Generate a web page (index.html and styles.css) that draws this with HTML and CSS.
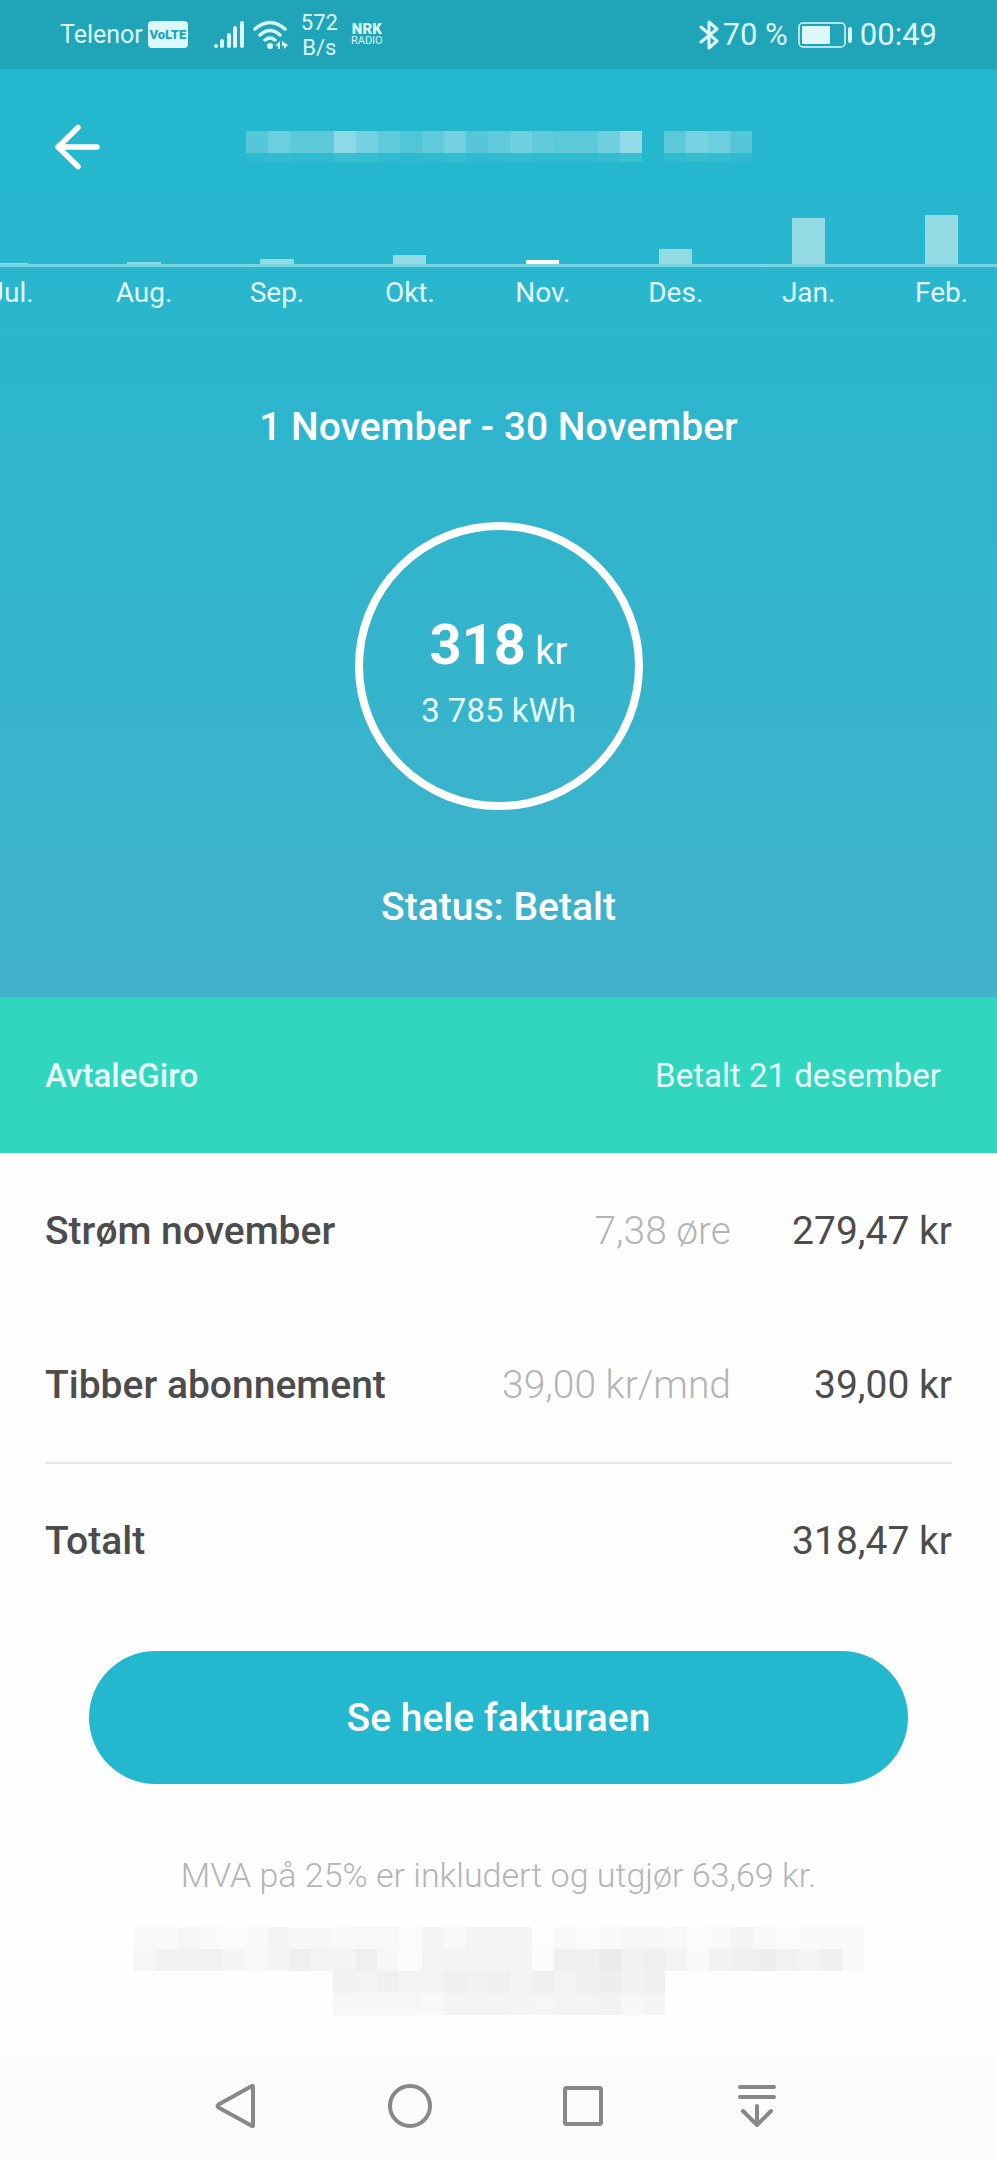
FILE: index.html
```html
<!DOCTYPE html>
<html lang="no">
<head>
<meta charset="utf-8">
<meta name="viewport" content="width=device-width, initial-scale=1">
<title>Faktura november</title>
<link rel="stylesheet" href="styles.css">
</head>
<body>
<div class="status-bar">
  <div class="status-left">
    <span class="carrier">Telenor</span>
    <span class="volte">VoLTE</span>
    <svg class="signal" width="32" height="30" viewBox="0 0 32 30" aria-hidden="true">
      <g stroke="currentColor" stroke-width="4" stroke-linecap="round">
        <path d="M3 26v0M9 21v5M16 15v11M22 8v18M29 3v23"/>
      </g>
    </svg>
    <svg class="wifi" width="36" height="30" viewBox="0 0 36 30" aria-hidden="true">
      <g fill="none" stroke="currentColor" stroke-width="3.500" stroke-linecap="round">
        <path d="M2 9Q17-4 32 9M7 15Q17 6 27 15M12 20Q17 16 22 20"/>
      </g>
      <circle cx="17" cy="26" r="3" fill="currentColor"/>
      <path d="M22 26l5-5v8h-2v-3zM29 21l6 4-4 4v-3h-2z" fill="currentColor"/>
    </svg>
    <span class="speed">572<br>B/s</span>
    <span class="nrk"><b>NRK</b><small>RADIO</small></span>
  </div>
  <div class="status-right">
    <svg width="20" height="30" viewBox="0 0 20 30" aria-hidden="true">
      <path d="M2 7l16 14-8 7V2l8 7L2 22" fill="none" stroke="currentColor" stroke-width="3" stroke-linejoin="round" stroke-linecap="round"/>
    </svg>
    <span class="percent">70 %</span>
    <svg width="54" height="26" viewBox="0 0 54 26" aria-hidden="true">
      <rect x="1" y="1" width="46" height="24" rx="4" fill="none" stroke="currentColor" stroke-width="1.500"/>
      <rect x="4" y="4" width="28" height="18" rx="1" fill="currentColor"/>
      <rect x="50" y="5" width="4" height="16" rx="2" fill="currentColor"/>
    </svg>
    <span class="clock">00:49</span>
  </div>
</div>

<header class="hero">
  <div class="top-bar">
    <button class="back" type="button" aria-label="Tilbake">
      <svg width="52" height="52" viewBox="0 0 52 52" aria-hidden="true">
        <path d="M45 26H6M26 6.500L6 26l20 19.500" fill="none" stroke="currentColor" stroke-width="5.500" stroke-linecap="round" stroke-linejoin="round"/>
      </svg>
    </button>
    <svg class="masked-title" id="title-mask" viewBox="0 0 506 32" aria-hidden="true"></svg>
  </div>

  <div class="chart">
    <div class="track">
      <div class="plot" id="plot"></div>
      <div class="months">
        <span>Jul.</span><span>Aug.</span><span>Sep.</span><span>Okt.</span><span>Nov.</span><span>Des.</span><span>Jan.</span><span>Feb.</span>
      </div>
    </div>
  </div>

  <h1 class="headline">1 November - 30 November</h1>
  <div class="ring">
    <p class="sum"><strong>318</strong> kr</p>
    <p class="usage">3 785 kWh</p>
  </div>
  <p class="headline">Status: Betalt</p>
</header>

<section class="payment">
  <strong>AvtaleGiro</strong>
  <span>Betalt 21 desember</span>
</section>

<main class="invoice">
  <table class="lines">
    <tbody>
      <tr><th scope="row">Strøm november</th><td class="rate">7,38 øre</td><td class="amount">279,47 kr</td></tr>
      <tr><th scope="row">Tibber abonnement</th><td class="rate">39,00 kr/mnd</td><td class="amount">39,00 kr</td></tr>
      <tr class="total"><th scope="row">Totalt</th><td class="rate"></td><td class="amount">318,47 kr</td></tr>
    </tbody>
  </table>
  <button class="cta" type="button">Se hele fakturaen</button>
  <p class="vat">MVA på 25% er inkludert og utgjør 63,69 kr.</p>
  <svg class="masked-note" id="note-mask" viewBox="0 0 726 88" aria-hidden="true"></svg>
</main>

<nav class="system-nav">
  <button type="button" aria-label="Tilbake">
    <svg width="46" height="46" viewBox="0 0 46 46"><path d="M5.500 21.500L39 3Q40 2.500 40 4V42Q40 43.500 39 43L5.500 24.500Q3.500 23 5.500 21.500z"/></svg>
  </button>
  <button type="button" aria-label="Hjem">
    <svg width="46" height="46" viewBox="0 0 46 46"><circle cx="23" cy="23" r="20"/></svg>
  </button>
  <button type="button" aria-label="Oversikt">
    <svg width="46" height="46" viewBox="0 0 46 46"><rect x="5" y="5" width="36" height="36" rx="1.500"/></svg>
  </button>
  <button type="button" aria-label="Varsler">
    <svg width="46" height="46" viewBox="0 0 46 46"><path d="M6 4H40M6 14H40M23 23V42M9 28L23 42L37 28"/></svg>
  </button>
</nav>
<script src="script.js"></script>
</body>
</html>
```

FILE: styles.css
```css
* {
  box-sizing: border-box;
}

body {
  margin: 0;
  min-height: 100vh;
  display: flex;
  flex-direction: column;
  background: #fefefe;
  color: #4c4c4c;
  font-family: Roboto, "Liberation Sans", sans-serif;
  font-size: 39px;
}

p,
h1 {
  margin: 0;
}

button {
  padding: 0;
  border: 0;
  background: none;
  color: inherit;
  font: inherit;
}

svg {
  display: block;
}

/* Status bar */

.status-bar {
  display: flex;
  justify-content: space-between;
  align-items: center;
  height: 69px;
  padding: 0 60px;
  background: #20a5b8;
  color: #dcf8fb;
}

.status-left,
.status-right {
  display: flex;
  align-items: center;
}

.carrier {
  font-size: 25px;
}

.volte {
  width: 40px;
  margin-left: 5px;
  border-radius: 4px;
  background: #dcf8fb;
  color: #20a5b8;
  font-size: 13px;
  font-weight: 900;
  line-height: 27px;
  text-align: center;
}

.signal {
  margin-left: 25px;
}

.wifi {
  margin-left: 8px;
}

.speed {
  margin-left: 12px;
  font-size: 22px;
  line-height: 25px;
  text-align: center;
}

.nrk {
  display: flex;
  flex-direction: column;
  margin-left: 13px;
  text-align: center;
  line-height: 12px;
}

.nrk b {
  font-size: 15px;
  font-weight: 900;
}

.nrk small {
  font-size: 11px;
}

.percent,
.clock {
  font-size: 31px;
}

.percent {
  margin: 0 10px 0 4px;
}

.clock {
  margin-left: 8px;
}

/* Header with chart and summary */

.hero {
  display: flex;
  flex-direction: column;
  align-items: center;
  padding-bottom: 66px;
  background: linear-gradient(#22b8cf, #40b2ca);
  color: #fff;
}

.top-bar {
  align-self: stretch;
  display: grid;
  grid-template-columns: 52px 1fr 52px;
  align-items: center;
  padding: 52px 52px 38px;
}

.masked-title {
  justify-self: center;
  width: 510px;
  height: 32px;
}

.chart {
  align-self: stretch;
  overflow: hidden;
}

/* Eight months, of which seven and a half fit on the screen */
.track {
  width: calc(100% / 7.5 * 8);
  margin-left: calc(100% / -18);
}

.plot {
  display: flex;
  align-items: flex-end;
  justify-content: space-around;
  height: 56px;
  border-bottom: 3px solid #7ad5e2;
}

.bar {
  width: calc(100% / 32);
  background: #94dae5;
}

.bar.selected {
  background: #fff;
}

.months {
  display: grid;
  grid-template-columns: repeat(8, 1fr);
  padding-top: 10px;
  color: #e2fafc;
  font-size: 28px;
  line-height: 32px;
  text-align: center;
}

.headline {
  font-size: 39px;
  font-weight: 500;
  line-height: 48px;
}

h1.headline {
  margin-top: 94px;
}

.ring {
  display: flex;
  flex-direction: column;
  align-items: center;
  justify-content: center;
  width: 288px;
  height: 288px;
  margin: 71px 0 73px;
  padding-top: 12px;
  border: 8px solid #fff;
  border-radius: 50%;
}

.sum {
  font-size: 38px;
  line-height: 72px;
}

.sum strong {
  font-size: 56px;
}

.usage {
  font-size: 33px;
  line-height: 48px;
  color: #e2fafc;
}

/* Payment strip */

.payment {
  display: flex;
  align-items: center;
  justify-content: space-between;
  height: 156px;
  padding: 0 56px 0 45px;
  background: #30d6be;
  color: #e8fffb;
  font-size: 33px;
}

.payment strong {
  font-weight: 500;
}

/* Invoice */

.invoice {
  display: flex;
  flex-direction: column;
  align-items: stretch;
  padding: 0 45px 36px;
}

.lines {
  border-collapse: collapse;
}

.lines th,
.lines td {
  height: 155px;
  padding: 0;
  font-weight: 400;
  text-align: right;
}

.lines th {
  font-weight: 500;
  text-align: left;
}

.lines .rate {
  color: #b4b4b4;
  font-weight: 300;
}

.lines .amount {
  width: 221px;
}

.total {
  border-top: 2px solid #e6e6e6;
}

.cta {
  height: 133px;
  margin: 33px 44px 0;
  border-radius: 67px;
  background: #24b8ce;
  color: #fff;
  font-weight: 500;
}

.vat {
  margin-top: 67px;
  color: #b4b4b4;
  font-size: 34px;
  font-weight: 300;
  line-height: 48px;
  text-align: center;
}

.masked-note {
  align-self: center;
  width: 730px;
  margin-top: 28px;
}

/* System navigation */

.system-nav {
  display: grid;
  grid-template-columns: repeat(4, 1fr);
  height: 108px;
  margin-top: auto;
  padding: 0 15.3% 0 14.9%;
  background: #fcfcfc;
}

.system-nav button {
  display: flex;
  align-items: center;
  justify-content: center;
}

.system-nav svg {
  fill: none;
  stroke: #888;
  stroke-width: 4;
  stroke-linecap: round;
  stroke-linejoin: round;
}
```

FILE: script.js
```js
const SVG_NS = "http://www.w3.org/2000/svg";

function addRect(svg, x, y, width, height, fill) {
  const rect = document.createElementNS(SVG_NS, "rect");
  rect.setAttribute("x", x);
  rect.setAttribute("y", y);
  rect.setAttribute("width", width);
  rect.setAttribute("height", height);
  rect.setAttribute("fill", fill);
  rect.setAttribute("shape-rendering", "crispEdges");
  svg.append(rect);
}

// Monthly bars, July to February
const months = [1, 2, 5, 9, 4, 15, 46, 49];
const plot = document.getElementById("plot");
months.forEach((height, i) => {
  const bar = document.createElement("div");
  bar.className = i === 4 ? "bar selected" : "bar";
  bar.style.height = height + "px";
  plot.append(bar);
});

// Masked address: white tiles by opacity in percent
const title = document.getElementById("title-mask");
[22, 32, 25, 25, 48, 36, 27, 20, 27, 36, 22, 27, 34, 28, 26, 26, 34, 50, 0, 25, 38, 33, 22]
  .forEach((alpha, i) => {
    addRect(title, i * 22, 0, 22, 22, `rgb(255 255 255 / ${alpha}%)`);
    addRect(title, i * 22, 22, 22, 9, `rgb(255 255 255 / ${alpha / 5}%)`);
  });

// Masked customer details: grey tiles, two hex digits each
const note = document.getElementById("note-mask");
[
  [0, "f9f9f6fafbfaf5f7f7f9f8f8fbf5f9f5f5f5fdf9fbfaf6f6f8fbf9f5f9fbfafafa"],
  [0, "f6f1f1f1f5f8f5eff3f3eff7fbf4f4f4f4f4fcf0f0ebf1eff3faf2f0eef2f4f0f8"],
  [9, "f2f3f0f3f4f0f2f0f4f0f4efeef2f0"],
  [9, "f7f7f7f7f9f4f4f4f5f6f4f4f2f7f5"]
].forEach(([start, shades], row) => {
  shades.match(/../g).forEach((v, i) => {
    addRect(note, (start + i) * 22, row * 22, 22, 22, `#${v}${v}${v}`);
  });
});
```
